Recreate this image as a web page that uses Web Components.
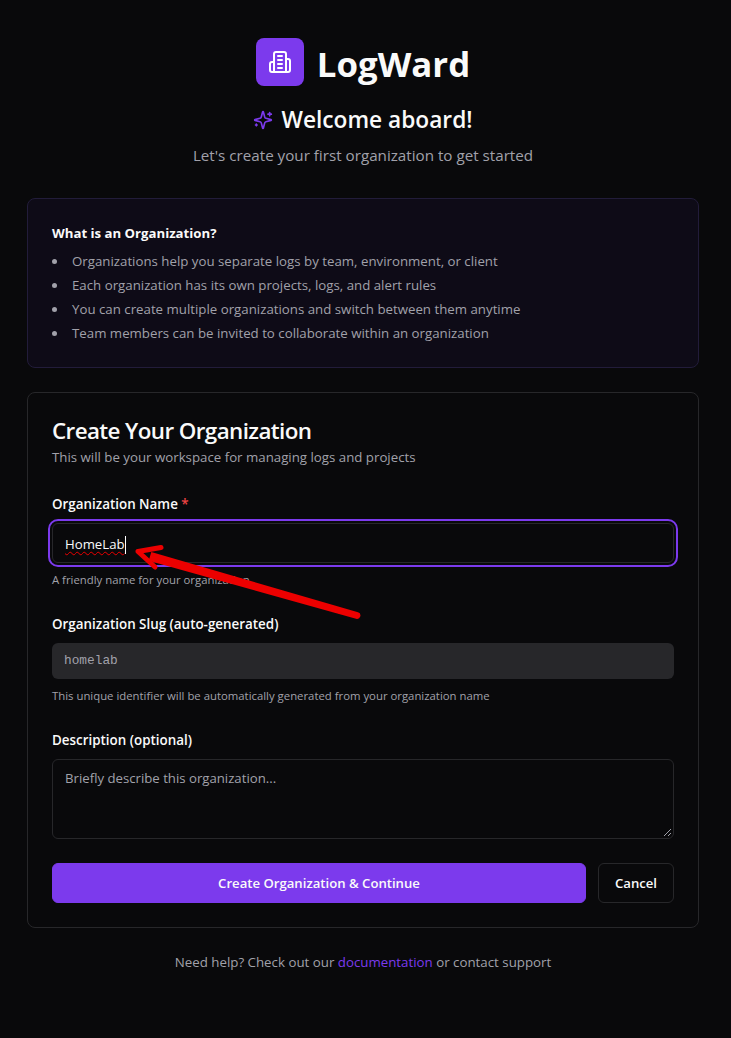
<!doctype html>
<html><head><meta charset="utf-8"><style>
html,body{margin:0;background:#09090b}
body{font-family:"Open Sans","Noto Sans",sans-serif;color:#fafafa}
</style></head><body>
<template id="t-page"><style>
:host{display:block;box-sizing:border-box;height:1038px;padding:38px 32px 0 27px;position:relative;overflow:hidden}
</style><slot></slot><svg style="position:absolute;left:130px;top:540px;overflow:visible" width="240" height="90" viewBox="130 540 240 90">
<path d="M151.3 552 L358 612.3 A3.4 3.4 0 0 1 356 618.8 L148.7 560.7 Z" fill="#ec0000"/>
<path d="M161 547.5 L138 551.5 L155 567" stroke="#ec0000" stroke-width="5" stroke-linecap="round" stroke-linejoin="round" fill="none"/>
</svg></template>

<template id="t-brand"><style>
:host{display:block;text-align:center}
.logo{display:flex;justify-content:center;align-items:center;gap:13px;height:48px}
.box{width:48px;height:48px;border-radius:8px;background:#7c3aed;display:flex;align-items:center;justify-content:center}
h1{margin:0;font-size:34.8px;font-weight:700;line-height:48px;position:relative;top:2px}
h2{margin:16px 0 0;font-size:22.7px;font-weight:600;line-height:36px;display:flex;justify-content:center;align-items:center;gap:8px}
p{margin:7px 0 0;font-size:15.2px;line-height:20px;color:#a1a1aa}
</style><div class="logo"><div class="box"><svg width="24" height="24" viewBox="0 0 24 24" fill="none" stroke="#fff" stroke-width="2" stroke-linecap="round" stroke-linejoin="round"><path d="M6 22V4a2 2 0 0 1 2-2h8a2 2 0 0 1 2 2v18Z"/><path d="M6 12H4a2 2 0 0 0-2 2v6a2 2 0 0 0 2 2h2"/><path d="M18 9h2a2 2 0 0 1 2 2v9a2 2 0 0 1-2 2h-2"/><path d="M10 6h4M10 10h4M10 14h4M10 18h4"/></svg></div><h1>LogWard</h1></div>
<h2><svg width="20" height="20" viewBox="0 0 24 24" fill="none" stroke="#7c3aed" stroke-width="2" stroke-linecap="round" stroke-linejoin="round"><path d="M9.937 15.5A2 2 0 0 0 8.5 14.063l-6.135-1.582a.5.5 0 0 1 0-.962L8.5 9.936A2 2 0 0 0 9.937 8.5l1.582-6.135a.5.5 0 0 1 .963 0L14.063 8.5A2 2 0 0 0 15.5 9.937l6.135 1.581a.5.5 0 0 1 0 .964L15.5 14.063a2 2 0 0 0-1.437 1.437l-1.582 6.135a.5.5 0 0 1-.963 0z"/><path d="M20 3v4M22 5h-4M4 17v2M5 18H3"/></svg><span>Welcome aboard!</span></h2>
<p>Let's create your first organization to get started</p></template>

<template id="t-info"><style>
:host{display:block;box-sizing:border-box;margin-top:33px;height:170px;padding:24px;border:1px solid #221c3a;border-radius:8px;background:#0e0b17}
h3{margin:0;font-size:13.2px;line-height:20px;font-weight:700;color:#fafafa}
ul{margin:8px 0 0;padding:0;list-style:none;font-size:13.28px;line-height:20px;color:#a1a1aa}
li{margin-bottom:4px;display:flex;align-items:center}
li::before{content:"";width:5px;height:5px;border-radius:50%;background:#a1a1aa;margin-right:15px;flex:none}
</style><h3>What is an Organization?</h3><ul>
<li>Organizations help you separate logs by team, environment, or client</li>
<li>Each organization has its own projects, logs, and alert rules</li>
<li>You can create multiple organizations and switch between them anytime</li>
<li>Team members can be invited to collaborate within an organization</li></ul></template>

<template id="t-card"><style>
:host{display:block;box-sizing:border-box;margin-top:24px;padding:24px;border:1px solid #27272a;border-radius:8px;background:#09090b;height:536px}
h2{margin:0;font-size:22.4px;font-weight:600;line-height:28px;letter-spacing:-.6px}
p{margin:2px 0 0;font-size:13.28px;line-height:20px;color:#a1a1aa}
.body{margin-top:27px;display:flex;flex-direction:column;gap:26px}
</style><h2>Create Your Organization</h2><p>This will be your workspace for managing logs and projects</p>
<div class="body"><slot></slot></div></template>

<template id="t-field"><style>
:host{display:block}
label{display:block;font-size:13.4px;font-weight:600;line-height:20px;margin-bottom:9px}
::slotted([slot=hint]){display:block;font-size:11.35px;line-height:16px;color:#a1a1aa;margin-top:9px}
</style><label><slot name="label"></slot></label><slot></slot><slot name="hint"></slot></template>

<template id="t-input"><style>
:host{display:block;box-sizing:border-box;position:relative;height:36px;border:1px solid #27272a;border-radius:6px;padding:0 12px;font-size:13.2px;line-height:34px}
:host([focus]){height:40px;line-height:40px;outline:2px solid #7c3aed;outline-offset:2px}
:host([muted]){background:#27272a;color:#a1a1aa;font-family:"Liberation Mono",monospace;font-size:12.8px;border:none;line-height:36px}
:host([area]){height:80px;line-height:20px;padding-top:8px;color:#a1a1aa}
</style><slot></slot></template>

<template id="t-btn"><style>
:host{display:flex;align-items:center;justify-content:center;box-sizing:border-box;height:40px;border-radius:6px;font-size:13.15px;font-weight:600;border:1px solid #27272a;color:#fafafa;width:76px}
:host([primary]){flex:1;width:auto;background:#7c3aed;border-color:#7c3aed}
</style><slot></slot></template>

<template id="t-foot"><style>
:host{display:block;text-align:center;margin-top:24px;font-size:13.3px;line-height:20px;color:#a1a1aa}
::slotted(a){color:#7c3aed;text-decoration:none}
</style><slot></slot></template>

<script>
for (const [n,t] of [['lw-page','t-page'],['lw-brand','t-brand'],['lw-info','t-info'],['lw-card','t-card'],['lw-field','t-field'],['lw-input','t-input'],['lw-btn','t-btn'],['lw-foot','t-foot']]) {
  customElements.define(n, class extends HTMLElement{constructor(){super();this.attachShadow({mode:'open'}).appendChild(document.getElementById(t).content.cloneNode(true));}});
}
</script>

<lw-page>
<lw-brand></lw-brand>
<lw-info></lw-info>
<lw-card>
<lw-field><span slot="label">Organization Name <span style="color:#ef4444">*</span></span>
<lw-input focus><span style="text-decoration:underline wavy #ec0000 1px;text-underline-offset:2px">HomeLab</span><span style="display:inline-block;width:1px;height:18px;background:#fff;vertical-align:-5px"></span></lw-input>
<span slot="hint">A friendly name for your organization</span></lw-field>
<lw-field><span slot="label">Organization Slug (auto-generated)</span>
<lw-input muted>homelab</lw-input>
<span slot="hint">This unique identifier will be automatically generated from your organization name</span></lw-field>
<lw-field style="margin-bottom:-2px"><span slot="label">Description (optional)</span>
<lw-input area>Briefly describe this organization...<svg style="position:absolute;right:1px;bottom:1px" width="9" height="9" viewBox="0 0 9 9"><path d="M1 8L8 1M5 8L8 5" stroke="#a1a1aa" stroke-width="1"/></svg></lw-input></lw-field>
<div style="display:flex;gap:12px"><lw-btn primary>Create Organization &amp; Continue</lw-btn><lw-btn>Cancel</lw-btn></div>
</lw-card>
<lw-foot>Need help? Check out our <a>documentation</a> or contact support</lw-foot>
</lw-page>
</body></html>
